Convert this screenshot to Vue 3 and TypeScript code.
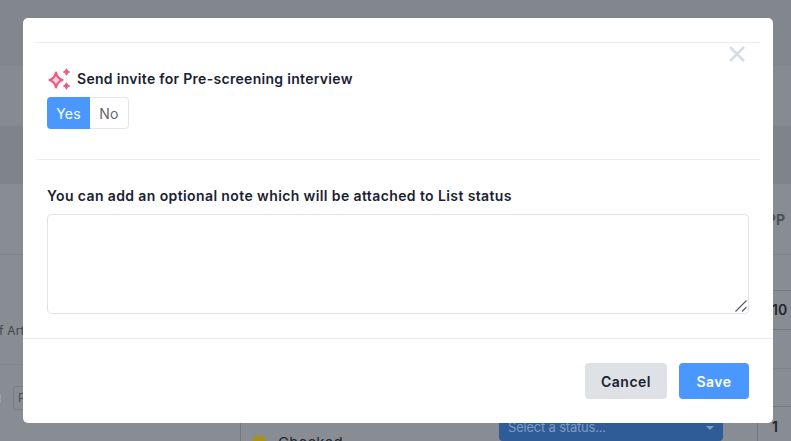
<script setup lang="ts">
import { ref } from 'vue'

const invite = ref('yes')
const note = ref('')
</script>

<template>
  <div class="page">
    <!-- dimmed table behind the modal -->
    <div class="backdrop">
      <div class="band band-top"></div>
      <div class="band band-a"></div>
      <div class="band band-b"></div>
      <div class="band band-head"><span class="pp">PP</span></div>
      <div class="table-body">
        <div class="col-left">
          <div class="cell-name"><span class="arts">f Arts</span></div>
          <div class="cell-pill">
            <i class="stub"></i>
            <span class="pill">P</span>
          </div>
        </div>
        <div class="col-status">
          <i class="dot"></i>
          <span>Checked</span>
        </div>
        <div class="col-select">
          <div class="status-select">
            <span>Select a status...</span>
            <i class="caret"></i>
          </div>
        </div>
        <div class="col-last">
          <div class="row r1"></div>
          <div class="row r2">10</div>
          <div class="row r3"></div>
          <div class="row r4"></div>
          <div class="row r5">1</div>
        </div>
      </div>
    </div>

    <div class="modal">
      <div class="section top">
        <button class="close" aria-label="Close">
          <svg width="16" height="16" viewBox="0 0 16 16"><path d="M1 1 15 15M15 1 1 15" stroke="#d5dce6" stroke-width="2.6" fill="none" /></svg>
        </button>
        <div class="heading">
          <svg class="sparkle" width="24" height="24" viewBox="0 0 24 24" fill="#fbd0da" stroke="#ef5a7f" stroke-linejoin="round">
            <path stroke-width="2.200" d="M9 5.500C10 10 11.500 11.800 15.500 13 11.500 14.200 10 16 9 20.500 8 16 6.500 14.200 2.500 13 6.500 11.800 8 10 9 5.500Z" />
            <path stroke-width="1.200" fill="#ef5a7f" d="M19.500 2C20 4 20.700 4.600 22.500 5 20.700 5.400 20 6 19.500 8 19 6 18.300 5.400 16.500 5 18.300 4.600 19 4 19.500 2Z" />
            <path stroke-width="1.200" fill="#ef5a7f" d="M19.500 16C20 18 20.700 18.600 22.500 19 20.700 19.400 20 20 19.500 22 19 20 18.300 19.400 16.500 19 18.300 18.600 19 18 19.500 16Z" />
          </svg>
          <span class="heading-text">Send invite for Pre-screening interview</span>
        </div>
        <div class="toggle">
          <button :class="{ on: invite === 'yes' }" @click="invite = 'yes'">Yes</button>
          <button :class="{ on: invite === 'no' }" @click="invite = 'no'">No</button>
        </div>
      </div>

      <div class="section middle">
        <label for="note">You can add an optional note which will be attached to List status</label>
        <div class="note-wrap">
          <textarea id="note" v-model="note"></textarea>
          <svg class="grip" width="14" height="14" viewBox="0 0 14 14">
            <path d="M1.500 12.500 12.500 1.500M8 12.500 12.500 8" stroke="#55585e" stroke-width="1.100" fill="none" />
          </svg>
        </div>
      </div>

      <div class="footer">
        <button class="btn cancel">Cancel</button>
        <button class="btn save">Save</button>
      </div>
    </div>
  </div>
</template>

<style>
html, body {
  margin: 0;
  overflow: hidden;
}
</style>

<style scoped>
.page {
  position: relative;
  width: 791px;
  height: 441px;
  overflow: hidden;
  font-family: Inter, "Liberation Sans", sans-serif;
}

.backdrop {
  height: 441px;
  display: flex;
  flex-direction: column;
  background: #888c93;
}

.band { flex: none; }
.band-top { height: 66px; background: #82878e; }
.band-a { height: 60px; background: #868b92; }
.band-b { height: 58px; background: #7f848b; }
.band-head {
  height: 70px;
  display: flex;
  justify-content: flex-end;
  align-items: center;
  padding-right: 6px;
}

.pp {
  font-size: 14px;
  font-weight: 700;
  color: #4b5057;
}

.table-body {
  flex: 1;
  display: flex;
  border-top: 1px solid #7f848b;
}

.col-left { width: 240px; flex: none; }

.cell-name {
  height: 110px;
  box-sizing: border-box;
  padding-top: 68px;
  border-bottom: 1px solid #7f848b;
}

.arts {
  display: block;
  margin-left: -1px;
  font-size: 12px;
  line-height: 16px;
  letter-spacing: 0.2px;
  color: #42464c;
}

.cell-pill {
  display: flex;
  align-items: center;
  gap: 12px;
  padding-top: 21px;
}

.stub {
  width: 1px;
  height: 8px;
  background: #9a9ea5;
}

.pill {
  width: 30px;
  height: 24px;
  box-sizing: border-box;
  padding-left: 4px;
  border: 1px solid #787d84;
  border-radius: 3px;
  font-size: 12px;
  line-height: 22px;
  color: #4b5057;
}

.col-status {
  width: 259px;
  flex: none;
  box-sizing: border-box;
  border-left: 1px solid #73787f;
  display: flex;
  gap: 12px;
  padding: 179px 0 0 11px;
  font-size: 15px;
  line-height: 18px;
  letter-spacing: 0.3px;
  color: #22262c;
}

.dot {
  width: 14px;
  height: 14px;
  margin-top: 1px;
  flex: none;
  border-radius: 50%;
  background: #a69317;
}

.col-select {
  width: 258px;
  flex: none;
  padding-top: 146px;
}

.status-select {
  height: 40px;
  width: 224px;
  box-sizing: border-box;
  border-radius: 4px;
  background: #2f5c97;
  color: #809bc0;
  font-size: 13px;
  letter-spacing: -0.2px;
  display: flex;
  justify-content: space-between;
  align-items: flex-end;
  padding: 0 9px 6px;
}

.caret {
  margin-bottom: 5px;
  border: 4px solid transparent;
  border-top-color: #809bc0;
  border-bottom: 0;
}

.col-last {
  flex: 1;
  border-left: 1px solid #73787f;
  font-size: 14px;
  font-weight: 600;
  color: #22262c;
}

.row {
  box-sizing: border-box;
  padding-left: 15px;
  display: flex;
  align-items: center;
}
.r1 { height: 36px; border-bottom: 1px solid #73787f; }
.r2 { height: 39px; border-bottom: 1px solid #73787f; padding-left: 14px; padding-bottom: 2px; }
.r3 { height: 39px; border-bottom: 1px solid #7f848b; }
.r4 { height: 38px; border-bottom: 1px solid #73787f; }
.r5 { height: 35px; padding-top: 4px; padding-left: 14px; }

.modal {
  position: absolute;
  left: 23px;
  top: 18px;
  width: 750px;
  height: 405px;
  box-sizing: border-box;
  padding: 24px 13px 0;
  display: flex;
  flex-direction: column;
  background: #fff;
  border-radius: 5px;
}

.section {
  position: relative;
  border-top: 1px solid #ebedf1;
  padding: 0 11px;
}

.top {
  height: 117px;
  padding-top: 24px;
  box-sizing: border-box;
}

.close {
  position: absolute;
  top: 3px;
  right: 15px;
  padding: 0;
  border: 0;
  background: none;
  line-height: 0;
}

.heading {
  display: flex;
  align-items: center;
  gap: 6px;
  height: 24px;
  font-size: 14px;
  font-weight: 600;
  letter-spacing: 0.3px;
  color: #1a2232;
}

.heading-text { margin-bottom: 2px; }

.toggle {
  display: flex;
  width: 82px;
  height: 32px;
  margin-top: 6px;
}

.toggle button {
  font-family: inherit;
  font-size: 14px;
  letter-spacing: 0.2px;
  color: #62666c;
  background: #fff;
  border: 1px solid #e3e6ec;
  border-left: 0;
  border-radius: 0 4px 4px 0;
  padding: 0;
  flex: 1;
}

.toggle button.on {
  flex: none;
  width: 43px;
  color: #fff;
  background: #4a98ff;
  border: 0;
  border-radius: 4px 0 0 4px;
}

.middle {
  height: 179px;
  box-sizing: border-box;
  padding-top: 27px;
}

.middle label {
  display: block;
  font-size: 14px;
  line-height: 18px;
  font-weight: 600;
  letter-spacing: 0.39px;
  color: #1a2232;
}

.note-wrap {
  position: relative;
  margin-top: 9px;
  line-height: 0;
}

.note-wrap textarea {
  display: block;
  width: 702px;
  height: 100px;
  box-sizing: border-box;
  border: 1px solid #e1e3e9;
  border-radius: 4px;
  outline: none;
  resize: none;
}

.grip {
  position: absolute;
  right: 1px;
  bottom: 1px;
}

.footer {
  margin: 0 -13px;
  border-top: 1px solid #ebedf1;
  flex: 1;
  display: flex;
  justify-content: flex-end;
  align-items: flex-start;
  gap: 12px;
  padding: 24px 24px 0 0;
}

.btn {
  height: 36px;
  border: 0;
  border-radius: 4px;
  font-family: inherit;
  font-size: 14px;
  font-weight: 600;
  letter-spacing: 0.5px;
  padding: 0;
}

.cancel {
  width: 82px;
  background: #dee1e6;
  color: #1a2232;
}

.save {
  width: 70px;
  background: #4a98ff;
  color: #fff;
}
</style>
